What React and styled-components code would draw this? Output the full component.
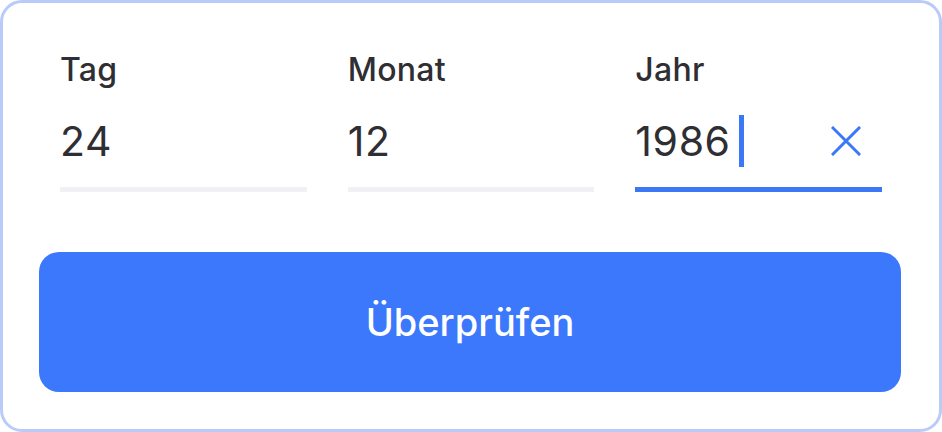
import React from 'react';
import styled, { createGlobalStyle } from 'styled-components';

const GlobalStyle = createGlobalStyle`
  html, body {
    margin: 0;
    padding: 0;
    background: #ffffff;
  }
  * {
    box-sizing: border-box;
  }
`;

const Card = styled.div`
  width: 942px;
  height: 432px;
  border: 3px solid #b9cbf8;
  border-radius: 22px;
  background: #ffffff;
  padding: 47px 38px 0 36px;
  font-family: Inter, "Noto Sans", sans-serif;
  color: #2e2e33;
`;

const Fields = styled.div`
  display: grid;
  grid-template-columns: repeat(3, 1fr);
  gap: 41px;
  padding: 0 19px 0 21px;
`;

const Field = styled.div`
  display: flex;
  flex-direction: column;
`;

const Label = styled.label`
  font-size: 32px;
  font-weight: 500;
  line-height: 40px;
  letter-spacing: 0.3px;
`;

const ValueRow = styled.div`
  display: flex;
  align-items: center;
  height: 97px;
  padding-right: 21px;
  margin-top: 5px;
  border-bottom: 5px solid ${p => (p.$active ? '#3b78f6' : '#f1f1f3')};
`;

const Value = styled.span`
  font-size: 41px;
  font-weight: 400;
  line-height: 1;
  letter-spacing: 0.6px;
`;

const Caret = styled.span`
  width: 5px;
  height: 52px;
  margin-left: 8px;
  background: #3b78f6;
`;

const ClearButton = styled.button`
  margin-left: auto;
  border: none;
  background: none;
  padding: 0;
  display: flex;
  color: #3b78f6;
  cursor: pointer;
`;

const SubmitButton = styled.button`
  display: block;
  width: 100%;
  height: 140px;
  margin-top: 60px;
  border: none;
  border-radius: 20px;
  background: #3b78fc;
  color: #ffffff;
  font-family: Inter, "Noto Sans", sans-serif;
  font-size: 38px;
  font-weight: 500;
  cursor: pointer;
`;

const XIcon = () => (
  <svg width="30" height="30" viewBox="0 0 30 30" fill="none" stroke="currentColor" strokeWidth="3" strokeLinecap="square">
    <path d="M2 2 L28 28 M28 2 L2 28" />
  </svg>
);

const App = () => {
  const fields = [
    { label: 'Tag', value: '24' },
    { label: 'Monat', value: '12' },
    { label: 'Jahr', value: '1986', active: true },
  ];

  return (
    <>
      <GlobalStyle />
      <Card>
        <Fields>
          {fields.map(f => (
            <Field key={f.label}>
              <Label>{f.label}</Label>
              <ValueRow $active={f.active}>
                <Value>{f.value}</Value>
                {f.active && (
                  <>
                    <Caret />
                    <ClearButton aria-label="Löschen">
                      <XIcon />
                    </ClearButton>
                  </>
                )}
              </ValueRow>
            </Field>
          ))}
        </Fields>
        <SubmitButton>Überprüfen</SubmitButton>
      </Card>
    </>
  );
};

export default App;
